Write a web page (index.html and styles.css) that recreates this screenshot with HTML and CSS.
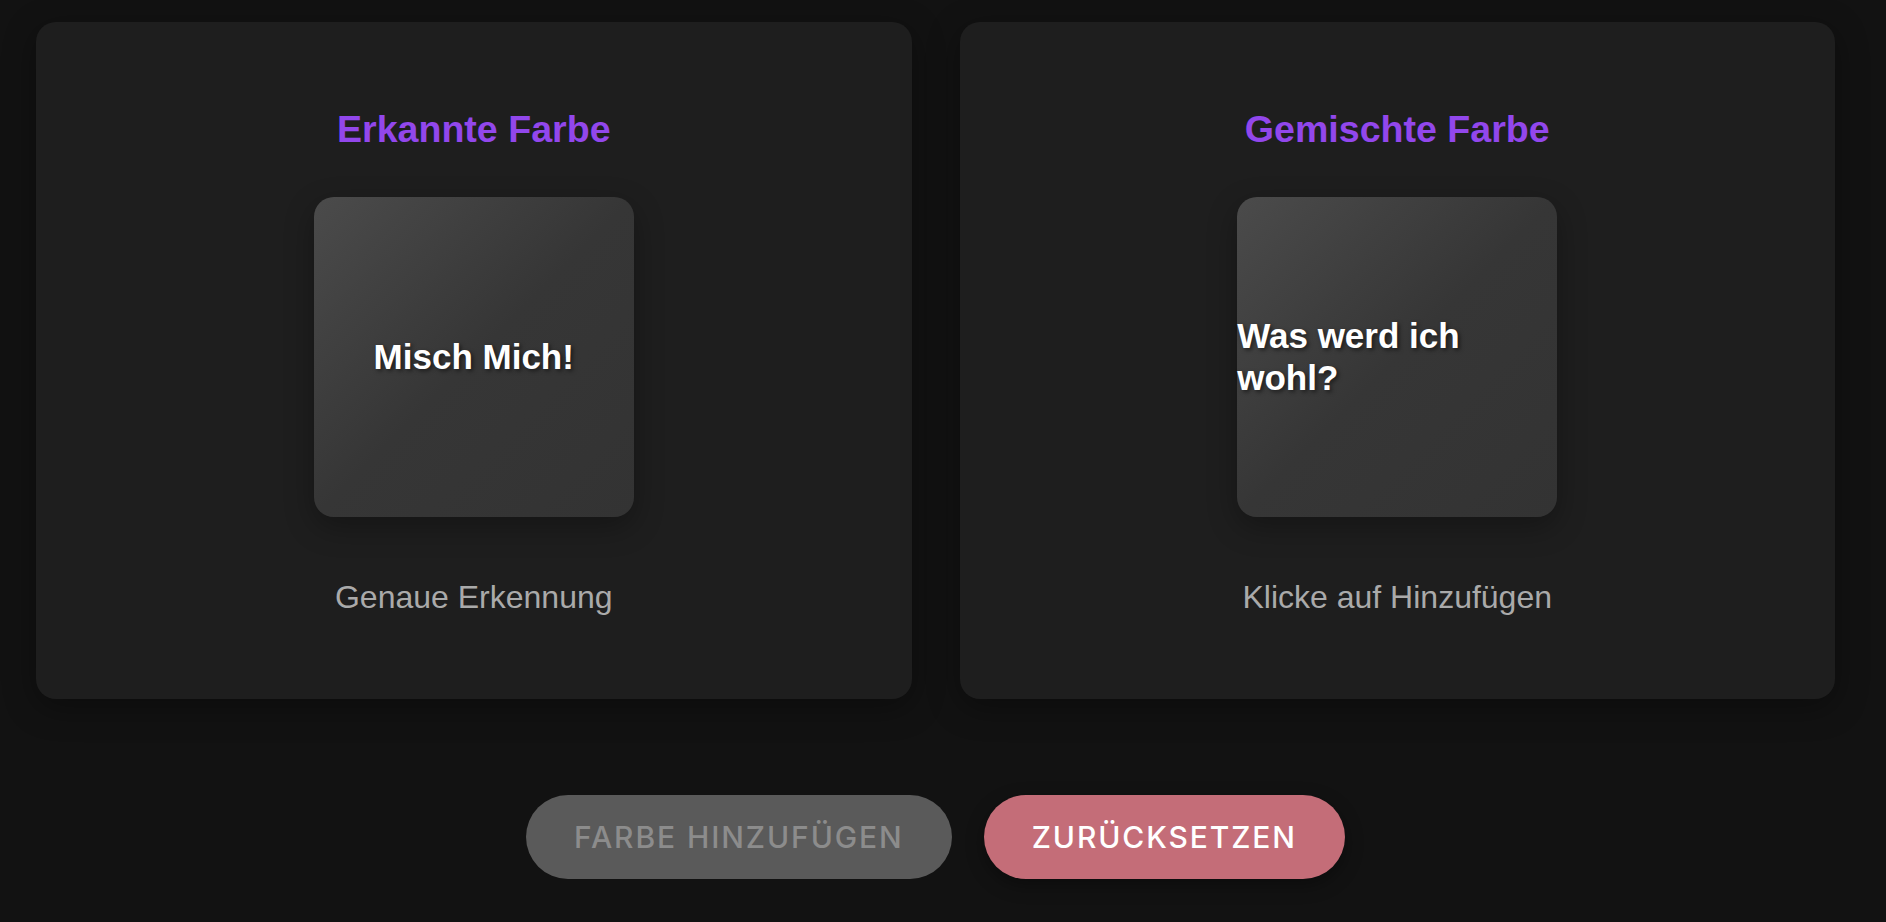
FILE: index.html
```html
<!DOCTYPE html>
<html lang="de">
<head>
<meta charset="utf-8">
<title>Farbmischer</title>
<link rel="stylesheet" href="styles.css">
</head>
<body>
<main class="app">
  <section class="panels">
    <div class="card">
      <h2 class="card-title">Erkannte Farbe</h2>
      <div class="swatch"><span class="swatch-text">Misch Mich!</span></div>
      <p class="card-sub">Genaue Erkennung</p>
    </div>
    <div class="card">
      <h2 class="card-title">Gemischte Farbe</h2>
      <div class="swatch"><span class="swatch-text">Was werd ich wohl?</span></div>
      <p class="card-sub">Klicke auf Hinzufügen</p>
    </div>
  </section>
  <div class="actions">
    <button class="btn btn-add" disabled>FARBE HINZUFÜGEN</button>
    <button class="btn btn-reset">ZURÜCKSETZEN</button>
  </div>
</main>
</body>
</html>
```
FILE: styles.css
```css
html, body {
  margin: 0;
  padding: 0;
  background: #121212;
  height: 100%;
}
body {
  font-family: "Liberation Sans", Arial, sans-serif;
  color: #fff;
}
.app {
  padding: 22px 51px 0 36px;
}
.panels {
  display: grid;
  grid-template-columns: 1fr 1fr;
  gap: 48px;
}
.card {
  background: #1e1e1e;
  border-radius: 20px;
  box-shadow: 0 8px 32px rgba(0, 0, 0, 0.35);
  display: flex;
  flex-direction: column;
  align-items: center;
  padding: 85px 24px 83px;
}
.card-title {
  margin: 0;
  font-size: 37.6px;
  line-height: 44px;
  font-weight: 700;
  color: #9247ec;
}
.swatch {
  margin-top: 46px;
  width: 320px;
  height: 320px;
  border-radius: 20px;
  background: linear-gradient(135deg, #4b4b4b 0%, #363636 50%, #333333 100%);
  box-shadow: 0 10px 30px rgba(0, 0, 0, 0.3);
  display: flex;
  align-items: center;
  justify-content: center;
}
.swatch-text {
  font-size: 35px;
  line-height: 42px;
  font-weight: 700;
  color: #fff;
  text-shadow: 2px 2px 4px rgba(0, 0, 0, 0.55);
}
.card-sub {
  margin: 62px 0 0;
  font-size: 32px;
  line-height: 37px;
  color: #aaaaaa;
}
.actions {
  display: flex;
  justify-content: center;
  gap: 32px;
  margin-top: 96px;
}
.btn {
  height: 84px;
  border: none;
  border-radius: 42px;
  padding: 0 48px;
  font-family: Inter, "Liberation Sans", sans-serif;
  font-size: 30px;
  font-weight: 500;
  letter-spacing: 1.9px;
}
.btn-add {
  background: #5a5a5a;
  color: #8c8c8c;
}
.btn-reset {
  background: #c46d78;
  color: #ffffff;
  box-shadow: 0 6px 18px rgba(0, 0, 0, 0.35);
}
```
